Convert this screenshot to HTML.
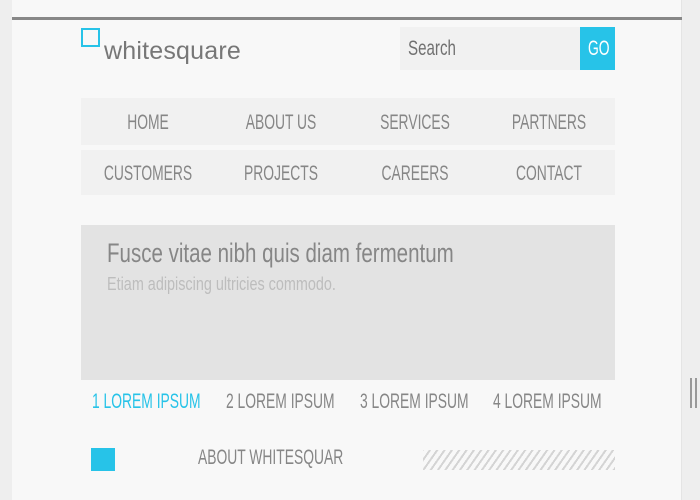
<!DOCTYPE html>
<html><head><meta charset="utf-8"><style>
*{margin:0;padding:0;box-sizing:border-box}
body{width:700px;height:500px;background:#eeeeee;position:relative;overflow:hidden;font-family:"Liberation Sans",sans-serif}
.page{position:absolute;left:12px;top:0;width:670px;height:500px;background:#f8f8f8;border-right:1px solid #e4e4e4}
.topline{position:absolute;left:12px;top:17px;width:670px;height:3px;background:#888}
.a{position:absolute}
.t{position:absolute;white-space:nowrap;color:#868686;transform:scaleX(0.66);transform-origin:left center}
.c{transform-origin:center center;text-align:center}
</style></head><body>
<div class="page"></div>
<div class="topline"></div>
<div class="a" style="left:81px;top:28px;width:19px;height:19px;border:2px solid #27c3e8"></div>
<div class="a" style="left:104px;top:37px;font-size:25px;color:#777;letter-spacing:0.2px;white-space:nowrap">whitesquare</div>
<div class="a" style="left:400px;top:27px;width:180px;height:43px;background:#f1f1f1"></div>
<div class="t" style="left:408px;top:37px;font-size:21px;color:#707070;transform:scaleX(0.72)">Search</div>
<div class="a" style="left:580px;top:27px;width:35px;height:43px;background:#27c3e8"></div>
<div class="t" style="left:588px;top:37px;font-size:21px;color:#fff">GO</div>
<div class="a" style="left:81px;top:98px;width:534px;height:47px;background:#f1f1f1"></div>
<div class="a" style="left:81px;top:150px;width:534px;height:45px;background:#f1f1f1"></div>
<div class="t c" style="left:81px;width:134px;top:111px;font-size:21px">HOME</div>
<div class="t c" style="left:214px;width:134px;top:111px;font-size:21px">ABOUT US</div>
<div class="t c" style="left:348px;width:134px;top:111px;font-size:21px">SERVICES</div>
<div class="t c" style="left:482px;width:134px;top:111px;font-size:21px">PARTNERS</div>
<div class="t c" style="left:81px;width:134px;top:162px;font-size:21px">CUSTOMERS</div>
<div class="t c" style="left:214px;width:134px;top:162px;font-size:21px">PROJECTS</div>
<div class="t c" style="left:348px;width:134px;top:162px;font-size:21px">CAREERS</div>
<div class="t c" style="left:482px;width:134px;top:162px;font-size:21px">CONTACT</div>
<div class="a" style="left:81px;top:225px;width:534px;height:155px;background:#e3e3e3"></div>
<div class="t" style="left:107px;top:238px;font-size:27px;color:#868686;transform:scaleX(0.76)">Fusce vitae nibh quis diam fermentum</div>
<div class="t" style="left:107px;top:274px;font-size:18px;color:#bdbdbd;transform:scaleX(0.8)">Etiam adipiscing ultricies commodo.</div>
<div class="t" style="left:92px;top:390px;font-size:21px;color:#27c3e8">1 LOREM IPSUM</div>
<div class="t" style="left:226px;top:390px;font-size:21px">2 LOREM IPSUM</div>
<div class="t" style="left:360px;top:390px;font-size:21px">3 LOREM IPSUM</div>
<div class="t" style="left:493px;top:390px;font-size:21px">4 LOREM IPSUM</div>
<div class="a" style="left:91px;top:448px;width:24px;height:23px;background:#27c3e8"></div>
<div class="t" style="left:198px;top:446px;font-size:21px">ABOUT WHITESQUAR</div>
<div class="a" style="left:423px;top:450px;width:192px;height:20px;background:repeating-linear-gradient(-55deg,#d4d4d4 0 2px,transparent 2px 6px)"></div>
<div class="a" style="left:690px;top:378px;width:2px;height:30px;background:#999"></div>
<div class="a" style="left:695px;top:378px;width:2px;height:30px;background:#999"></div>
</body></html>
